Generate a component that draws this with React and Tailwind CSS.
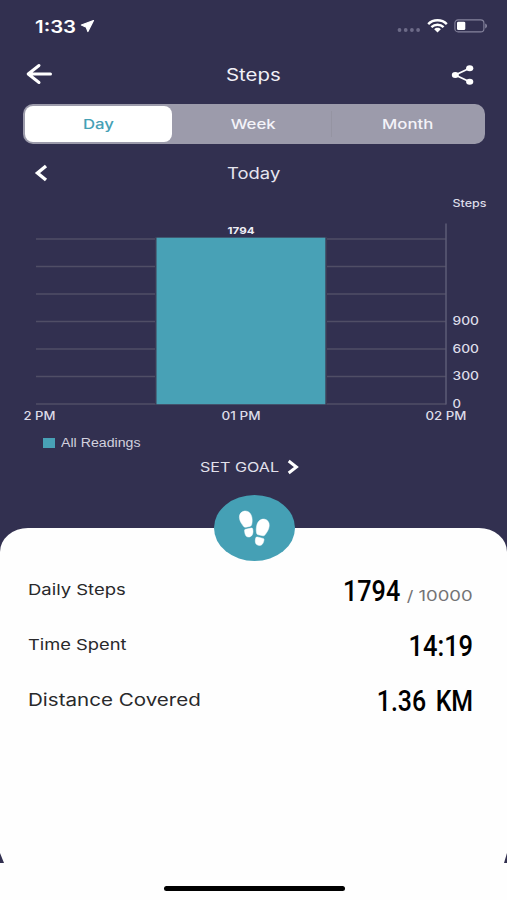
import React, { useState } from 'react'

const ranges = [
  { id: 'Day', width: 'w-[147px] mr-[3px]' },
  { id: 'Week', width: 'w-[156px]' },
  { id: 'Month', width: 'w-[154px]' }
]

const gridLines = [239, 266.5, 294, 321.5, 349, 376.5, 404]

const yLabels = [
  { text: '900', y: 325.3, width: 26.5 },
  { text: '600', y: 352.7, width: 26.5 },
  { text: '300', y: 380.3, width: 26.5 },
  { text: '0', y: 407.5, width: 8.5 }
]

const xLabels = [
  { text: '2 PM', x: 23.5, width: 32 },
  { text: '01 PM', x: 221.5, width: 39 },
  { text: '02 PM', x: 425.5, width: 41 }
]

const StatusBar = () => (
  <div className="flex h-[52px] items-center justify-between pl-[35px] pr-[19px]">
    <div className="flex items-center">
      <span className="mt-[2px] w-[45px] origin-left scale-x-[1.2] text-[17px] font-semibold leading-none">1:33</span>
      <svg width="15" height="14" viewBox="0 0 15 14" fill="currentColor">
        <path d="M13.500 1.500 7.900 12.500 6.300 8.200 1.400 6z" stroke="currentColor" strokeWidth="1.200" strokeLinejoin="round" />
      </svg>
    </div>
    <div className="flex items-center">
      <svg width="24" height="14" viewBox="0 0 24 14" className="mr-[6px]" fill="#6d6b88">
        <circle cx="2.500" cy="11" r="1.900" />
        <circle cx="8.700" cy="11" r="1.900" />
        <circle cx="14.900" cy="11" r="1.900" />
        <circle cx="21.100" cy="11" r="1.900" />
      </svg>
      <svg width="21" height="14" viewBox="0 0 21 14" className="mr-[6px]" fill="none" stroke="currentColor">
        <path d="M1.2 5.1C6.3.1 14.7.1 19.8 5.1" strokeWidth="2.500" />
        <path d="M4.4 8.1c3.4-3.2 8.8-3.2 12.2 0" strokeWidth="2.400" />
        <path d="M7.200 10.200c1.800-1.800 4.800-1.800 6.600 0l-3.300 3.200z" fill="currentColor" stroke="none" />
      </svg>
      <svg width="34" height="14" viewBox="0 0 34 14">
        <rect x=".9" y=".9" width="29" height="12" rx="3.2" fill="none" stroke="#86849d" strokeWidth="1.1" />
        <rect x="3" y="2.700" width="8.300" height="8.400" rx="1.400" fill="#fff" />
        <path d="M31.200 4.600c2.400.8 2.400 4 0 4.800z" fill="#86849d" />
      </svg>
    </div>
  </div>
)

const Header = () => (
  <header className="grid h-[44px] grid-cols-3 items-center pl-[26px] pr-[32px]">
    <svg width="27" height="22" viewBox="0 0 27 22" fill="none" stroke="currentColor" strokeWidth="3" strokeLinecap="round" strokeLinejoin="round">
      <path d="M24.500 11H2.200M13 2.500 2.200 11l10.800 8.500" />
    </svg>
    <h1 className="ml-[5px] mt-[2px] origin-center scale-x-[1.2] text-center text-[17px] leading-none text-[#f1f0f7]">Steps</h1>
    <svg width="24" height="22" viewBox="0 0 24 22" className="mt-px justify-self-end" fill="currentColor" stroke="currentColor">
      <path d="M18.6 4.3 4.3 11l14.3 6.8" fill="none" strokeWidth="1.8" />
      <ellipse cx="4.3" cy="11" rx="3.5" ry="3" stroke="none" />
      <ellipse cx="18.7" cy="4.3" rx="3.6" ry="3" stroke="none" />
      <ellipse cx="18.7" cy="17.8" rx="3.6" ry="3" stroke="none" />
    </svg>
  </header>
)

const RangeTabs = () => {
  const [active, setActive] = useState('Day')

  return (
    <div className="ml-[23px] mr-[22px] mt-2 flex h-10 rounded-[10px] bg-[#9c9bab] bg-[linear-gradient(#9594a2,#9594a2)] bg-[length:1px_26px] bg-[position:308px_7px] bg-no-repeat p-[2px]">
      {ranges.map((range) => (
        <button
          key={range.id}
          onClick={() => setActive(range.id)}
          className={`flex shrink-0 items-center justify-center rounded-[8px] text-[13.5px] font-medium ${range.width} ${
            active === range.id ? 'bg-white text-[#45a0b5]' : 'text-[#f4f3f9]'
          }`}
        >
          <span className="mt-px scale-x-[1.24]">{range.id}</span>
        </button>
      ))}
    </div>
  )
}

const StepsChart = () => (
  <svg width="507" height="232" viewBox="0 194 507 232" className="block" fill="#dddce8">
    <text x="452.5" y="206.5" fontSize="10.5" fontWeight="500" textLength="34" lengthAdjust="spacingAndGlyphs">Steps</text>
    {gridLines.map((y) => (
      <line key={y} x1="36" x2="446" y1={y} y2={y} stroke="#504e66" strokeWidth="1.6" />
    ))}
    <line x1="446" x2="446" y1="223.5" y2="404.5" stroke="#5d5b76" strokeWidth="1.5" />
    <rect x="155" y="237" width="172" height="167.5" fill="#3d3b55" />
    <rect x="156.500" y="237.700" width="168.800" height="166.500" fill="#48a1b6" />
    <text x="227.5" y="233.5" fontSize="9.5" fontWeight="700" fill="#eeedf5" textLength="27" lengthAdjust="spacingAndGlyphs">1794</text>
    {yLabels.map(({ text, y, width }) => (
      <text key={text} x="452.5" y={y} fontSize="11.5" fontWeight="500" textLength={width} lengthAdjust="spacingAndGlyphs">{text}</text>
    ))}
    {xLabels.map(({ text, x, width }) => (
      <text key={text} x={x} y="419.9" fontSize="11.5" fontWeight="500" textLength={width} lengthAdjust="spacingAndGlyphs">{text}</text>
    ))}
  </svg>
)

const StepsBadge = () => (
  <div className="absolute left-[214px] top-[-33px] flex h-[66px] w-[81px] items-center justify-center rounded-[50%] bg-[#45a0b5]">
    <svg width="81" height="66" viewBox="0 0 81 66" fill="#fff" stroke="#fff" strokeWidth=".5">
      <path d="M30.500 16.100c3.900-.5 6.700 2.500 7.400 6.400.5 2.800.3 5.200-.3 7.300-.3 1-.9 1.400-1.900 1.600l-3.700.8c-1.200.2-2-.1-2.700-1.100-1.700-2.500-3.700-5-3.900-8.500-.2-3.600 1.900-6.100 5.100-6.500z" />
      <path d="M31.500 34.300 37 33.100c1-.2 1.600.1 1.800 1.100.7 3.900-.3 7.100-3.200 7.700-3.100.6-4.600-1.500-5-5.500-.2-1.300-.1-1.900.9-2.100z" />
      <path d="M50.600 24.200c-4.100-.6-6.900 2.300-7.800 6.100-.7 3-.7 5.500-.2 7.700.2 1 .7 1.600 1.700 1.800l4.400.9c1.100.2 1.800-.1 2.500-1.100 1.700-2.500 3.700-5 4-8.600.3-3.600-1.500-6.300-4.600-6.800z" />
      <path d="M49.100 43.400 43.500 42c-1-.2-1.500.1-1.800 1.100-1 3.700-.3 6.600 2.500 7.200 3.200.7 5-1.300 5.700-4.900.2-1.200.1-1.800-.8-2z" />
    </svg>
  </div>
)

const Summary = () => (
  <div className="flex flex-col pl-7 pr-[34px] pt-[35px] text-[#29292b]">
    <div className="flex h-[55px] items-center justify-between">
      <span className="origin-left scale-x-[1.23] text-[15px]">Daily Steps</span>
      <div className="flex items-baseline">
        <span className="origin-right scale-x-[0.84] font-[Roboto] text-[30px] font-medium text-black">1794</span>
        <span className="ml-[19px] origin-right scale-x-[1.23] text-[15px] text-[#737375]">/ 10000</span>
      </div>
    </div>
    <div className="flex h-[55px] items-center justify-between">
      <span className="origin-left scale-x-[1.22] text-[15px]">Time Spent</span>
      <span className="origin-right scale-x-[0.85] font-[Roboto] text-[30px] font-medium text-black">14:19</span>
    </div>
    <div className="flex h-[55px] items-center justify-between">
      <span className="origin-left scale-x-[1.21] text-[17px]">Distance Covered</span>
      <span className="origin-right scale-x-[0.83] font-[Roboto] text-[30px] font-medium text-black [word-spacing:4px]">1.36 KM</span>
    </div>
  </div>
)

const App = () => (
  <div className="flex h-[900px] w-[507px] flex-col overflow-hidden bg-[#323050] font-[Inter,sans-serif] text-white">
    <StatusBar />
    <Header />
    <RangeTabs />

    <div className="grid h-[50px] grid-cols-3 items-center pl-[33px] pr-[32px] pt-[8px]">
      <svg width="16" height="18" viewBox="0 0 16 18" fill="none" stroke="currentColor" strokeWidth="3.400">
        <path d="M13 2 4.500 9l8.500 7" />
      </svg>
      <span className="scale-x-[1.15] text-center text-[16px] leading-none text-[#e6e5ef]">Today</span>
    </div>

    <StepsChart />

    <div className="flex h-[32px] items-center pl-[43px] text-[#d3d2df]">
      <span className="mr-[6px] mt-px h-[10px] w-[12px] bg-[#48a1b6]" />
      <span className="mt-[2px] origin-left scale-x-[1.18] font-[family-name:Liberation_Sans] text-[12px]">All Readings</span>
    </div>

    <button className="flex h-[18px] items-center self-start pl-[200px] text-[#e2e1ec]">
      <span className="mr-[23px] mt-px origin-left scale-x-[1.24] text-[13px] leading-none">SET GOAL</span>
      <svg width="13" height="16" viewBox="0 0 13 16" fill="none" stroke="#fff" strokeWidth="3">
        <path d="M1.700 2 9.400 8l-7.700 6" />
      </svg>
    </button>

    <div className="mt-[52px] flex flex-1 flex-col">
      <section className="relative flex flex-1 flex-col rounded-t-[28px_24px] bg-[#fefefe]">
        <StepsBadge />
        <Summary />
        <div className="mt-auto flex h-[47px] items-center justify-between">
          <svg width="4" height="10" viewBox="0 0 4 10" className="self-start" fill="#323050">
            <path d="M0 0v10h4z" />
          </svg>
          <svg width="3" height="10" viewBox="0 0 3 10" className="self-start" fill="#323050">
            <path d="M3 0v10H0z" />
          </svg>
        </div>
        <div className="absolute bottom-[9px] left-[164px] h-[5px] w-[181px] rounded-full bg-black" />
      </section>
    </div>
  </div>
)

export default App
